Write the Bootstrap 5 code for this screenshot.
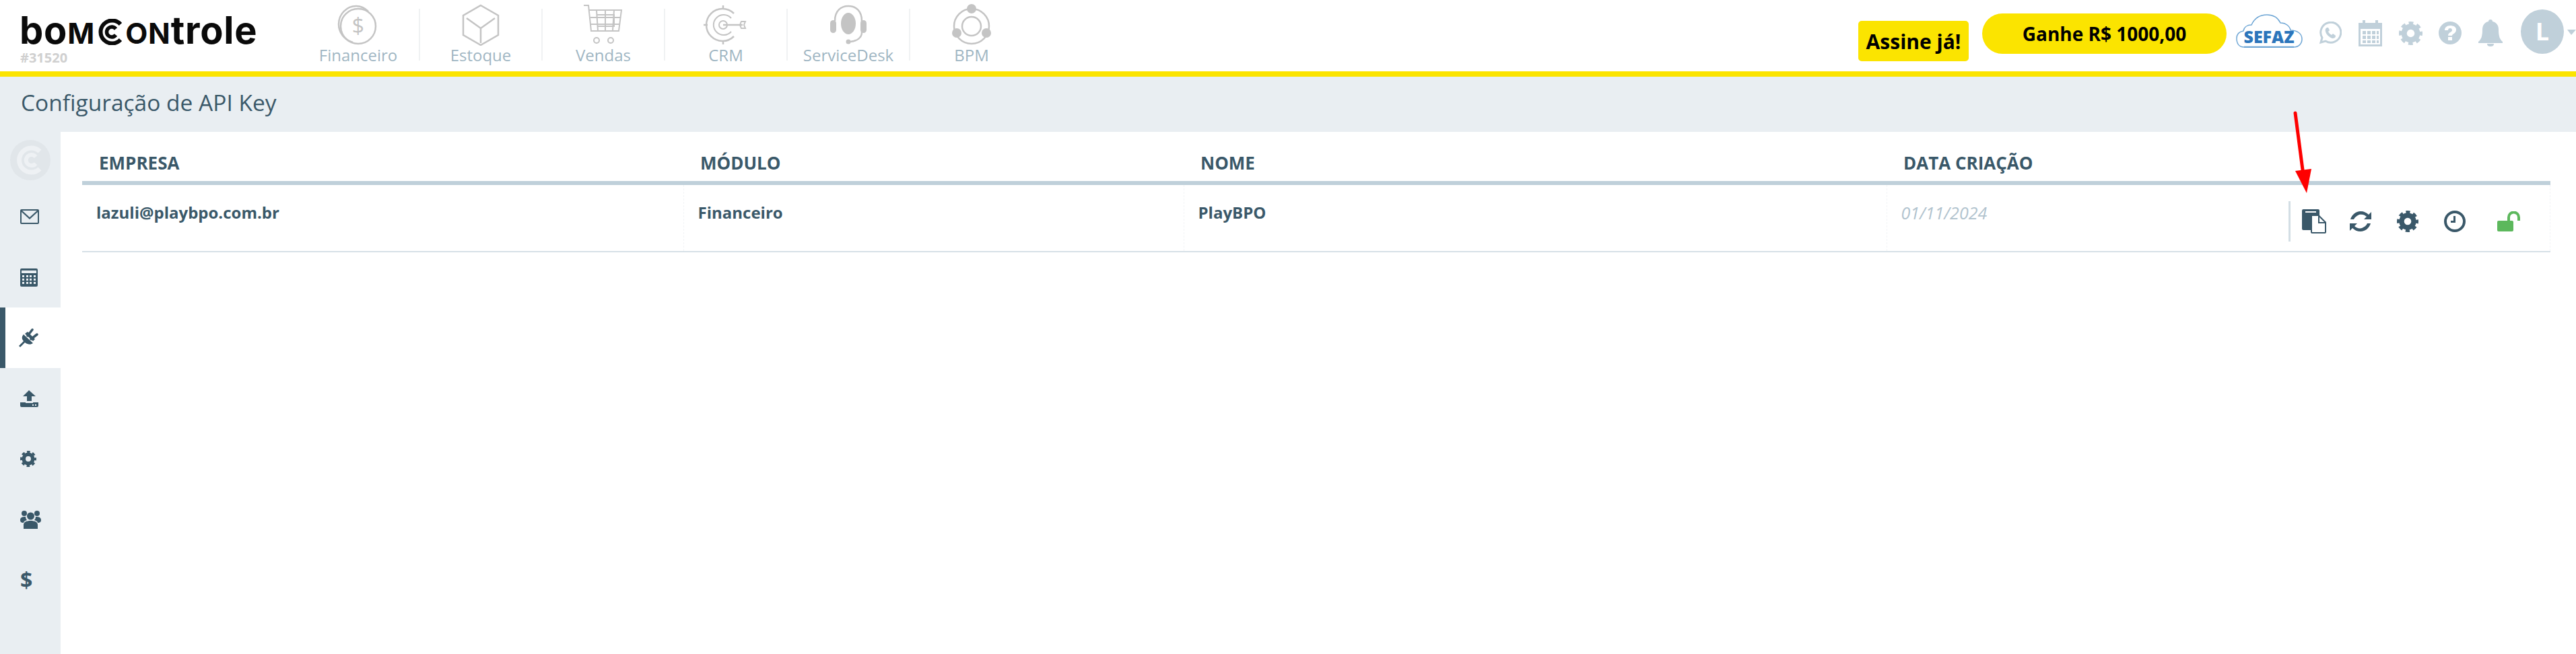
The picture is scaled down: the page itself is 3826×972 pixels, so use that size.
<!DOCTYPE html>
<html lang="pt-BR">
<head>
<meta charset="utf-8">
<title>Configuração de API Key</title>
<link href="https://cdn.jsdelivr.net/npm/bootstrap@5.3.0/dist/css/bootstrap.min.css" rel="stylesheet">
<style>
html,body{height:100%;}
body{font-family:"Open Sans","Liberation Sans",sans-serif;background:#fff;color:#3a5869;overflow:hidden;position:relative;width:3826px;height:972px;}
.topbar{height:114px;border-bottom:8px solid #fbe400;background:#fff;}
.brand{width:442px;padding:19px 0 0 29px;line-height:1;}
.brand-name{font-family:Inter,"Liberation Sans",sans-serif;font-weight:700;font-size:56px;line-height:52px;color:#0a0a0a;letter-spacing:.8px;display:flex;align-items:baseline;white-space:nowrap;height:54px;}
.brand-caps{font-size:43px;}
.brand-c{width:41px;height:39px;align-self:flex-end;margin:0 2px 6px 2px;}
.brand-id{font-size:20px;font-weight:700;color:#d0d0d0;margin-top:0;padding-left:1px;line-height:26px;}
.modulo{width:182px;height:77px;margin-top:13px;border-right:2px solid #f0f2f3;position:relative;}
.modulo-ico{height:62px;width:70px;margin-top:-7px;flex:none;}
.modulo-label{font-size:24px;line-height:24px;color:#9fb6c3;margin-top:2px;white-space:nowrap;}
.btn-assine,.btn-ganhe{background:#fbe400;color:#000;font-weight:700;border:0;padding:0;}
.btn-assine{width:164px;height:60px;margin-top:31px;margin-right:20px;font-size:30px;border-radius:5px;}
.btn-ganhe{width:363px;height:60px;margin-top:20px;margin-right:14px;font-size:28px;border-radius:30px;}
.sefaz{width:99px;height:50px;margin-top:21px;margin-right:24px;}
.ticon{margin-right:24px;fill:#c0d0da;}
.t1{width:34px;height:34px;margin-top:32px;}
.t2{width:37px;height:40px;margin-top:29px;}
.t3{width:35px;height:35px;margin-top:32px;}
.t4{width:34px;height:34px;margin-top:32px;}
.t5{width:38px;height:40px;margin-top:29px;margin-right:26px;}
.avatar{width:64px;height:66px;margin-top:14px;background:#c0d0da;color:#fff;font-size:36px;font-weight:700;}
.caret-down{width:0;height:0;border-left:6px solid transparent;border-right:7px solid transparent;border-top:8px solid #c0d0da;margin:44px 0 0 5px;}
.titlebar{height:82px;background:#e9eef2;padding-left:31px;}
.page-title{font-size:33.500px;font-weight:400;margin:0 0 4px;line-height:1;color:#3a5869;}
.shell{height:776px;}
.sidemenu{width:90px;background:#e9eef2;flex:none;}
.side-logo{height:81px;padding:12px 0 0 15px;}
.side-logo svg{width:60px;height:60px;}
.side-item{height:90px;padding-left:30px;text-decoration:none;}
.side-item svg{fill:#3a5869;}
.side-item.ativo{background:#fff;border-left:8px solid #3a5869;padding-left:20px;}
.side-dolar{font-size:32px;line-height:1;font-weight:700;color:#3a5869;}
.content{padding:0 39px 0 32px;background:#fff;}
.apitable.table{table-layout:fixed;width:3665px;margin:0;--bs-table-color:#3a5869;--bs-table-bg:transparent;}
.apitable.table > thead > tr > th{height:76px;padding:0 0 12px 25px;font-size:26px;font-weight:700;line-height:30px;vertical-align:bottom;border-bottom:6px solid #bfd0da;color:#3a5869;}
.apitable.table > tbody > tr > td{height:102px;padding:26px 0 0 21px;font-size:24px;font-weight:700;line-height:30px;vertical-align:top;border-bottom:2px solid #d6e0e7;border-left:1px dashed #f2f4f6;color:#3a5869;}
.apitable.table > tbody > tr > td:first-child{border-left:0;}
.apitable.table > tbody > tr > td.cel-data{font-weight:400;font-style:italic;font-size:25px;color:#b1c3ce;}
.apitable.table > tbody > tr > td.cel-acoes{padding:24px 0 0 0;border-left:0;border-right:1px dashed #f2f4f6;}
.acoes{height:60px;border-left:3px solid #d3dee5;}
.acoes svg{fill:#3a5869;flex:none;}
.a1{width:36px;height:36px;margin-left:17px;}
.a2{width:32px;height:32px;margin-left:35px;}
.a3{width:32px;height:32px;margin-left:38px;}
.a4{width:32px;height:32px;margin-left:38px;}
.a5{width:35px;height:30px;margin-left:47px;}
.seta{position:absolute;left:3395px;top:160px;width:50px;height:135px;pointer-events:none;}
</style>
</head>
<body>
<svg width="0" height="0" class="position-absolute">
<defs>
<symbol id="i-gear" viewBox="0 0 32 32">
<circle cx="16" cy="16" r="9" fill="none" stroke="currentColor" stroke-width="7.4"/>
<circle cx="16" cy="16" r="14" fill="none" stroke="currentColor" stroke-width="4" stroke-dasharray="6.2 4.8" stroke-dashoffset="3.1"/>
</symbol>
</defs>
</svg>

<header class="topbar d-flex align-items-start">
  <div class="brand">
    <div class="brand-name"><span>bo</span><span class="brand-caps">M</span>
      <svg class="brand-c" viewBox="0 0 41 39" role="presentation"><path d="M36 8A17 17 0 1 0 36 31" fill="none" stroke="#0a0a0a" stroke-width="6"/><path d="M29 15A7.500 7.500 0 1 0 29 24" fill="none" stroke="#0a0a0a" stroke-width="5.500"/></svg>
      <span class="brand-caps">ON</span><span>trole</span></div>
    <div class="brand-id">#31520</div>
  </div>
  <nav class="d-flex">
    <a class="modulo d-flex flex-column align-items-center text-decoration-none" href="#">
      <svg class="modulo-ico" viewBox="0 0 70 62" fill="none" stroke="#c4c4c4" stroke-width="2.500"><path d="M27 57C14 53 6 42 6 30 6 15 18 3 32 3c7 0 13 3 18 8"/><circle cx="35" cy="33" r="26"/><text x="35" y="44" font-size="32" fill="#c4c4c4" stroke="none" text-anchor="middle" font-family="Open Sans">$</text></svg>
      <span class="modulo-label">Financeiro</span></a>
    <a class="modulo d-flex flex-column align-items-center text-decoration-none" href="#">
      <svg class="modulo-ico" viewBox="0 0 70 62" fill="none" stroke="#c4c4c4" stroke-width="2.500"><path d="M35 2 61 17V46L35 61 9 46V17ZM14 21 35 36 56 21M35 36V58"/></svg>
      <span class="modulo-label">Estoque</span></a>
    <a class="modulo d-flex flex-column align-items-center text-decoration-none" href="#">
      <svg class="modulo-ico" viewBox="0 0 70 62" fill="none" stroke="#c4c4c4" stroke-width="2"><path d="M6 2H13L17 40H58L62 9H14M16 20H60M17 30H59M25 9 27 40M38 9V40M51 9 49 40M25 16H51V33H26" /><circle cx="25" cy="54" r="4"/><circle cx="46" cy="54" r="4"/></svg>
      <span class="modulo-label">Vendas</span></a>
    <a class="modulo d-flex flex-column align-items-center text-decoration-none" href="#">
      <svg class="modulo-ico" viewBox="0 0 70 62" fill="none" stroke="#c4c4c4" stroke-width="2"><path d="M47 14A24 24 0 1 0 47 48" stroke-width="2.500"/><path d="M43 21A15 15 0 1 0 43 41"/><circle cx="31" cy="31" r="6"/><path d="M31 31H60M31 2V8M31 54V60M2 31H8" stroke-width="2.500"/><path d="M58 26 64 26 62 31 64 36 58 36 56 31Z"/></svg>
      <span class="modulo-label">CRM</span></a>
    <a class="modulo d-flex flex-column align-items-center text-decoration-none" href="#">
      <svg class="modulo-ico" viewBox="0 0 70 62" fill="none" stroke="#c4c4c4" stroke-width="2.500"><path d="M15 25C15 10 24 3 35 3S55 10 55 25V42C55 50 48 55 38 56"/><ellipse cx="35" cy="29" rx="11" ry="16" fill="#c4c4c4" stroke="none"/><rect x="8" y="24" width="9" height="19" rx="4.500" fill="#c4c4c4" stroke="none"/><rect x="53" y="24" width="9" height="19" rx="4.500" fill="#c4c4c4" stroke="none"/><circle cx="35" cy="56" r="3.500" fill="#c4c4c4" stroke="none"/></svg>
      <span class="modulo-label">ServiceDesk</span></a>
    <a class="modulo d-flex flex-column align-items-center text-decoration-none border-0" href="#">
      <svg class="modulo-ico" viewBox="0 0 70 62" fill="none" stroke="#c4c4c4" stroke-width="2.500"><circle cx="35" cy="33" r="14"/><circle cx="35" cy="33" r="26"/><ellipse cx="35" cy="7" rx="7" ry="7" fill="#c4c4c4" stroke="none"/><circle cx="13" cy="43" r="7" fill="#c4c4c4" stroke="none"/><circle cx="57" cy="43" r="7" fill="#c4c4c4" stroke="none"/></svg>
      <span class="modulo-label">BPM</span></a>
  </nav>
  <div class="ms-auto d-flex align-items-start">
    <button class="btn-assine" type="button">Assine já!</button>
    <button class="btn-ganhe" type="button">Ganhe R$ 1000,00</button>
    <svg class="sefaz" viewBox="0 0 99 50" fill="none"><path d="M12 49C4 49 1 43 1 36 1 30 5 26 11 25 12 19 17 16 23 16 27 7 35 1 46 1 57 1 63 7 66 13 74 13 80 18 81 24 91 24 98 29 98 37 98 44 93 49 86 49Z" fill="#fff" stroke="#6ea6d5" stroke-width="1.500"/><path d="M12 49H86" stroke="#6ea6d5" stroke-width="2.500"/><text x="49" y="43" text-anchor="middle" font-family="Open Sans" font-weight="800" font-size="25" fill="#2b75bb">SEFAZ</text></svg>
    <svg class="ticon t1" viewBox="0 0 34 34"><path fill="none" stroke="#c0d0da" stroke-width="3" d="M3 31 5 24A15 15 0 1 1 10 29Z"/><path d="M12 9C10 10 9 12 10 15 11 19 15 23 20 25 23 25 25 24 25 21L21 18 19 20C17 19 15 17 14 15L16 13 14 9Z"/></svg>
    <svg class="ticon t2" viewBox="0 0 37 40"><path fill-rule="evenodd" d="M1 5H7V1H11V5H26V1H30V5H36V40H1ZM4 14V37H33V14ZM7 17H12V22H7ZM14 17H19V22H14ZM21 17H26V22H21ZM28 17H31V22H28ZM7 24H12V29H7ZM14 24H19V29H14ZM21 24H26V29H21ZM28 24H31V29H28ZM7 31H12V35H7ZM14 31H19V35H14ZM21 31H26V35H21ZM28 31H31V35H28Z"/></svg>
    <svg class="ticon t3" style="color:#c0d0da"><use href="#i-gear"/></svg>
    <svg class="ticon t4" viewBox="0 0 34 34"><path fill-rule="evenodd" d="M17 0A17 17 0 1 1 17 34 17 17 0 0 1 17 0ZM14 23V28H20V23ZM17 6C12 6 9 9 9 13H14C14 11 15 10 17 10 19 10 20 11 20 13 20 16 14 16 14 21H20C20 18 26 18 26 12 26 8 22 6 17 6Z"/></svg>
    <svg class="ticon t5" viewBox="0 0 38 40"><path d="M19 0C21 0 22 1 22 3 28 4 31 9 31 15 31 25 33 30 37 33V35H1V33C5 30 7 25 7 15 7 9 10 4 16 3 16 1 17 0 19 0ZM14 36H24C24 39 22 40 19 40S14 39 14 36Z"/></svg>
    <div class="avatar rounded-circle d-flex align-items-center justify-content-center">L</div>
    <div class="caret-down"></div>
  </div>
</header>

<div class="titlebar d-flex align-items-center">
  <h1 class="page-title">Configuração de API Key</h1>
</div>

<div class="shell d-flex">
  <aside class="sidemenu d-flex flex-column">
    <div class="side-logo">
      <svg viewBox="0 0 60 60"><circle cx="30" cy="30" r="30" fill="#e1e6ea"/><path d="M44 17A18 18 0 1 0 44 43" fill="none" stroke="#eef1f4" stroke-width="7"/><path d="M38 25A8 8 0 1 0 38 35" fill="none" stroke="#eef1f4" stroke-width="6"/></svg>
    </div>
    <a class="side-item d-flex align-items-center" href="#"><svg width="28" height="22" viewBox="0 0 28 22"><path fill-rule="evenodd" d="M2 0H26A2 2 0 0 1 28 2V20A2 2 0 0 1 26 22H2A2 2 0 0 1 0 20V2A2 2 0 0 1 2 0ZM3 2 14 12 25 2ZM2 4V20H26V4L14 15Z"/></svg></a>
    <a class="side-item d-flex align-items-center" href="#"><svg width="26" height="27" viewBox="0 0 26 27"><path fill-rule="evenodd" d="M2 0H24A2 2 0 0 1 26 2V25A2 2 0 0 1 24 27H2A2 2 0 0 1 0 25V2A2 2 0 0 1 2 0ZM2 3V7H24V3ZM3 10V13H6V10ZM9 10V13H12V10ZM14 10V13H17V10ZM20 10V13H23V10ZM3 15V18H6V15ZM9 15V18H12V15ZM14 15V18H17V15ZM20 15V18H23V15ZM3 20V23H6V20ZM9 20V23H12V20ZM14 20V23H17V20ZM20 20V23H23V20Z"/></svg></a>
    <a class="side-item ativo d-flex align-items-center" href="#"><svg width="29" height="28" viewBox="0 0 29 28"><path d="M7 9 21 22C17 25 13 24 9 21L2 28 0 26 7 19C4 16 4 12 7 9Z"/><path d="M13 11 20 2M18 16 27 9" fill="none" stroke="#3a5869" stroke-width="3.500" stroke-linecap="round"/><path d="M9 8 13 5 24 16 21 19Z"/></svg></a>
    <a class="side-item d-flex align-items-center" href="#"><svg width="27" height="25" viewBox="0 0 27 25"><path fill-rule="evenodd" d="M13 0 23 9H17V16H10V9H4ZM0 18H8V19H19V18H27V23A2 2 0 0 1 25 25H2A2 2 0 0 1 0 23ZM18 21V23H20V21ZM22 21V23H24V21Z"/></svg></a>
    <a class="side-item d-flex align-items-center" href="#"><svg width="24" height="24" style="color:#3a5869"><use href="#i-gear"/></svg></a>
    <a class="side-item d-flex align-items-center" href="#"><svg width="31" height="28" viewBox="0 0 31 28"><circle cx="6" cy="5" r="4"/><circle cx="25" cy="5" r="4"/><circle cx="15.500" cy="9" r="5.500"/><path d="M0 15C0 11 3 10 8 10 8 12 9 14 10 15 7 16 5 17 5 19 2 19 0 18 0 15ZM31 15C31 11 28 10 23 10 23 12 22 14 21 15 24 16 26 17 26 19 29 19 31 18 31 15ZM5 28V22C5 18 9 16 15.500 16S26 18 26 22V28Z"/></svg></a>
    <a class="side-item d-flex align-items-center" href="#"><span class="side-dolar">$</span></a>
  </aside>
  <main class="content flex-grow-1">
    <table class="table apitable">
      <colgroup><col style="width:893px"><col style="width:743px"><col style="width:1044px"><col style="width:597px"><col style="width:388px"></colgroup>
      <thead><tr><th>EMPRESA</th><th>MÓDULO</th><th>NOME</th><th>DATA CRIAÇÃO</th><th></th></tr></thead>
      <tbody><tr>
        <td>lazuli@playbpo.com.br</td>
        <td>Financeiro</td>
        <td>PlayBPO</td>
        <td class="cel-data">01/11/2024</td>
        <td class="cel-acoes">
          <div class="acoes d-flex align-items-center">
            <svg class="a1" viewBox="0 0 36 36"><path fill-rule="evenodd" d="M2 0H24A2 2 0 0 1 26 2V9L36 19V34A2 2 0 0 1 34 36H15A2 2 0 0 1 13 34V31H2A2 2 0 0 1 0 29V2A2 2 0 0 1 2 0ZM5 3V5H21V3ZM15 10V34H34V21H24V10ZM26 12V19H33Z"/></svg>
            <svg class="a2" viewBox="0 0 32 32"><path d="M32 2V13H21L25 9C22 6 18 5 14 6 10 8 7 10 6 13H1C3 6 9 1 16 1 21 1 25 3 28 6ZM0 30V19H11L7 23C10 26 14 27 18 26 22 24 25 22 26 19H31C29 26 23 31 16 31 11 31 7 29 4 26Z"/></svg>
            <svg class="a3" style="color:#3a5869"><use href="#i-gear"/></svg>
            <svg class="a4" viewBox="0 0 32 32"><path fill-rule="evenodd" d="M16 0A16 16 0 1 1 16 32 16 16 0 0 1 16 0ZM16 4A12 12 0 1 0 16 28 12 12 0 0 0 16 4ZM17 8V18H10V15H14V8Z"/></svg>
            <svg class="a5" viewBox="0 0 35 30"><rect x="0" y="14" width="24" height="16" rx="2" fill="#5cb85c"/><path d="M17 15V9A7.500 7.500 0 0 1 32 9V14" fill="none" stroke="#5cb85c" stroke-width="4"/></svg>
          </div>
        </td>
      </tr></tbody>
    </table>
  </main>
</div>

<svg class="seta" viewBox="0 0 50 135"><path d="M14 8 26 100" stroke="#fe0000" stroke-width="5" stroke-linecap="round" fill="none"/><path d="M14 94 38 91 31 127Z" fill="#fe0000"/></svg>
<script src="https://cdn.jsdelivr.net/npm/bootstrap@5.3.0/dist/js/bootstrap.bundle.min.js"></script>
</body>
</html>
